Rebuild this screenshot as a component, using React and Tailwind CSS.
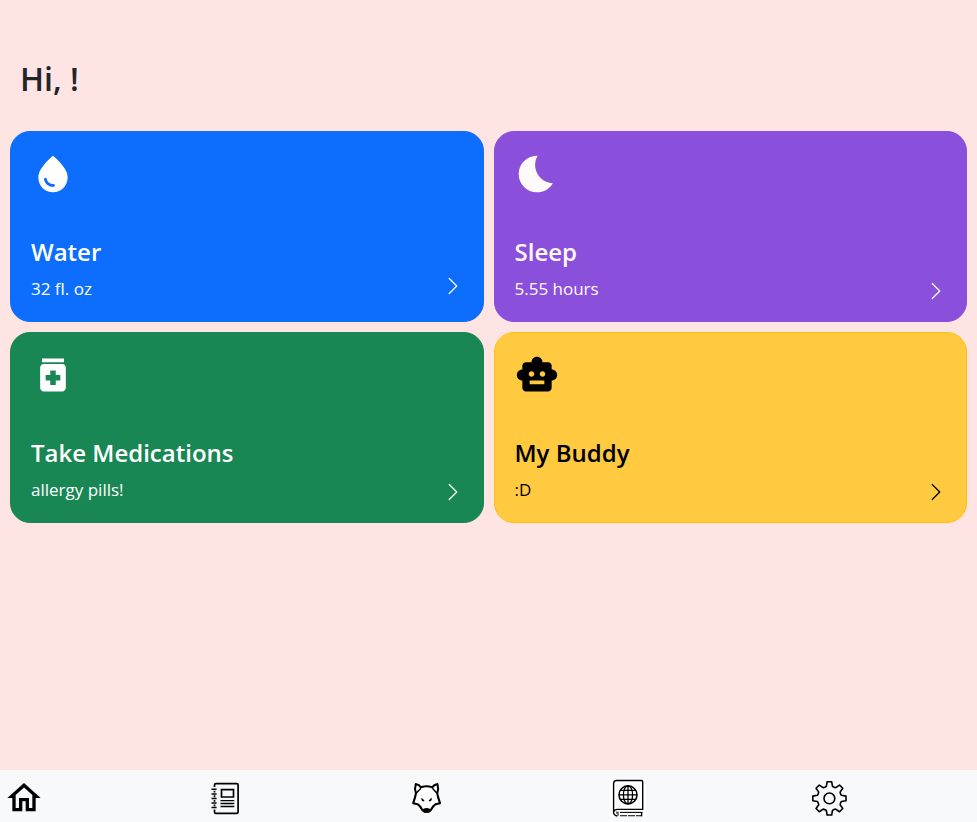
import { MdWaterDrop, MdBedtime, MdMedication, MdSmartToy, MdOutlineHome } from "react-icons/md";
import { BsChevronRight } from "react-icons/bs";

const cards = [
  {
    title: "Water",
    detail: "32 fl. oz",
    Icon: MdWaterDrop,
    style: "border-[#0d6efd] bg-[#0d6efd] text-white",
    chevron: "mb-[5px]",
  },
  {
    title: "Sleep",
    detail: "5.55 hours",
    Icon: MdBedtime,
    style: "border-[#8a4fdb] bg-[#8a4fdb] text-[#fffafa]",
    chevron: "",
  },
  {
    title: "Take Medications",
    detail: "allergy pills!",
    Icon: MdMedication,
    style: "border-[#198754] bg-[#198754] text-white",
    chevron: "",
  },
  {
    title: "My Buddy",
    detail: ":D",
    Icon: MdSmartToy,
    style: "border-[#ffc107] bg-[#ffca40] text-black",
    chevron: "",
  },
];

function JournalIcon() {
  return (
    <svg viewBox="0 0 40 40" className="size-10" fill="none" stroke="currentColor" strokeWidth="1.7" aria-hidden="true">
      <path d="M9.5 9V7Q9.5 5.6 11 5.6H31.6Q33.1 5.6 33.1 7.1V33.9Q33.1 35.4 31.6 35.4H11Q9.5 35.4 9.5 33.9V31.5" />
      <path d="M9.5 12.8V14.6M9.5 17.3V19.2M9.5 22V23.8M9.5 26.4V28.2" />
      <path d="M6.5 11.2H11.6M6.5 15.9H11.6M6.5 20.5H11.6M6.5 25H11.6M6.5 29.5H11.6" strokeWidth="1.5" />
      <path d="M16.5 11.6H28.5V19H16.5Z" />
      <path d="M15.5 22.6H29.3M15.5 25.5H29.3M15.5 28.5H29.3" strokeWidth="1.4" />
    </svg>
  );
}

function WolfIcon() {
  return (
    <svg viewBox="0 0 40 40" className="size-10" fill="none" stroke="currentColor" strokeLinejoin="round" strokeLinecap="round" aria-hidden="true">
      <path
        d="M9.8 6C12 6.4 13.8 7.6 15 9.4C18.6 7.9 22.6 7.9 26.2 9.4C27.4 7.6 29.2 6.4 31.4 6C32.4 9 32.3 12.4 31.2 15.2C31.8 18.4 32.8 21.6 34 25.2L29.6 26.2C27.6 27.6 25.8 29.8 24.8 32.2Q23.8 33.8 20.6 33.8Q17.4 33.8 16.4 32.2C15.4 29.8 13.6 27.6 11.6 26.2L7.2 25.2C8.4 21.6 9.4 18.4 10 15.2C8.9 12.4 8.8 9 9.8 6Z"
        fill="white"
        strokeWidth="2.1"
      />
      <path d="M10.4 15L14.4 10.8M30.8 15L26.8 10.8" strokeWidth="1.5" />
      <path d="M17.8 31.4Q20.6 30.2 23.4 31.4L22.8 34H18.4Z" fill="currentColor" strokeWidth="1.4" />
      <path d="M15.8 20.8L17.8 22.6L16.6 22.6ZM25.4 20.8L23.4 22.6L24.6 22.6Z" fill="currentColor" strokeWidth="1.2" />
    </svg>
  );
}

function AtlasIcon() {
  return (
    <svg viewBox="0 0 40 40" className="size-10" fill="none" stroke="currentColor" aria-hidden="true">
      <path d="M2.5 1H39V39H2.5Z" fill="white" stroke="none" />
      <path d="M6.6 35.5V5.6Q6.6 2.5 9.7 2.5H34.4Q35.7 2.5 35.7 3.8V31.4H10Q6.6 31.8 6.6 34.5Q6.8 37.5 10.4 38" strokeWidth="1.4" />
      <path d="M13 34.4H35.4" strokeWidth="1.1" />
      <path d="M13 37.8H34" strokeWidth="1.1" strokeDasharray="7 1" />
      <path d="M34.6 34V38.4" strokeWidth="1.4" />
      <path d="M9.8 33.6V35.6M11 33.8V37.8" strokeWidth="1" />
      <circle cx="21" cy="16.9" r="9" strokeWidth="1.6" />
      <ellipse cx="21" cy="16.9" rx="4.6" ry="9" strokeWidth="1.3" />
      <path d="M21 7.9V25.9M12 16.9H30M13.6 12.4H28.4M13.6 21.4H28.4" strokeWidth="1.3" />
    </svg>
  );
}

const toothAngles = [0, 45, 90, 135, 180, 225, 270, 315];

function rotatePoint(x, y, degrees) {
  const a = (degrees * Math.PI) / 180;
  const px = 21.4 + x * Math.cos(a) - y * Math.sin(a);
  const py = 20.4 + x * Math.sin(a) + y * Math.cos(a);
  return `${px.toFixed(2)} ${py.toFixed(2)}`;
}

const gearPath =
  toothAngles
    .map((a, i) => {
      const p = (x, y) => rotatePoint(x, y, a);
      return `${i === 0 ? "M" : "L"}${p(-3.1, -12)}L${p(-2.3, -16.6)}L${p(2.3, -16.6)}L${p(3.1, -12)}Q${p(4.6, -10.9)} ${p(6.3, -10.7)}`;
    })
    .join("") + "Z";

function GearIcon() {
  return (
    <svg viewBox="0 0 40 40" className="size-10" fill="none" stroke="currentColor" strokeWidth="1.6" strokeLinejoin="round" aria-hidden="true">
      <path d={gearPath} />
      <circle cx="21.4" cy="20.4" r="5.4" />
    </svg>
  );
}

const tabs = [
  { label: "Home", icon: <MdOutlineHome className="size-10" aria-hidden="true" /> },
  { label: "Journal", icon: <JournalIcon /> },
  { label: "Buddy", icon: <WolfIcon /> },
  { label: "Resources", icon: <AtlasIcon /> },
  { label: "Settings", icon: <GearIcon /> },
];

function Card({ title, detail, Icon, style, chevron }) {
  return (
    <button type="button" className={`flex flex-col rounded-[20px] border p-5 text-left ${style}`}>
      <Icon className="size-11" aria-hidden="true" />
      <span className="mt-10 flex w-full items-end justify-between">
        <span className="flex flex-col">
          <span className="text-2xl leading-8 font-semibold">{title}</span>
          <span className="mt-2 text-[17px] leading-[25px]">{detail}</span>
        </span>
        <BsChevronRight className={`size-5 ${chevron}`} aria-hidden="true" />
      </span>
    </button>
  );
}

export default function App() {
  return (
    <div className="flex min-h-screen flex-col bg-[#ffe4e4] font-['Segoe_UI','Open_Sans','Noto_Sans',sans-serif] text-[#212529]">
      <main className="flex-1 px-2.5 pt-[59px]">
        <h1 className="px-2.5 text-[32px] leading-10 font-semibold">Hi, !</h1>
        <div className="mt-8 grid grid-cols-2 gap-2.5">
          {cards.map((card) => (
            <Card key={card.title} {...card} />
          ))}
        </div>
      </main>
      <nav className="grid grid-cols-5 gap-x-8 bg-[#f8f9fa] pt-2 pb-1 pl-1 text-black">
        {tabs.map((tab) => (
          <a key={tab.label} href="#" aria-label={tab.label} className="flex">
            {tab.icon}
          </a>
        ))}
      </nav>
    </div>
  );
}
